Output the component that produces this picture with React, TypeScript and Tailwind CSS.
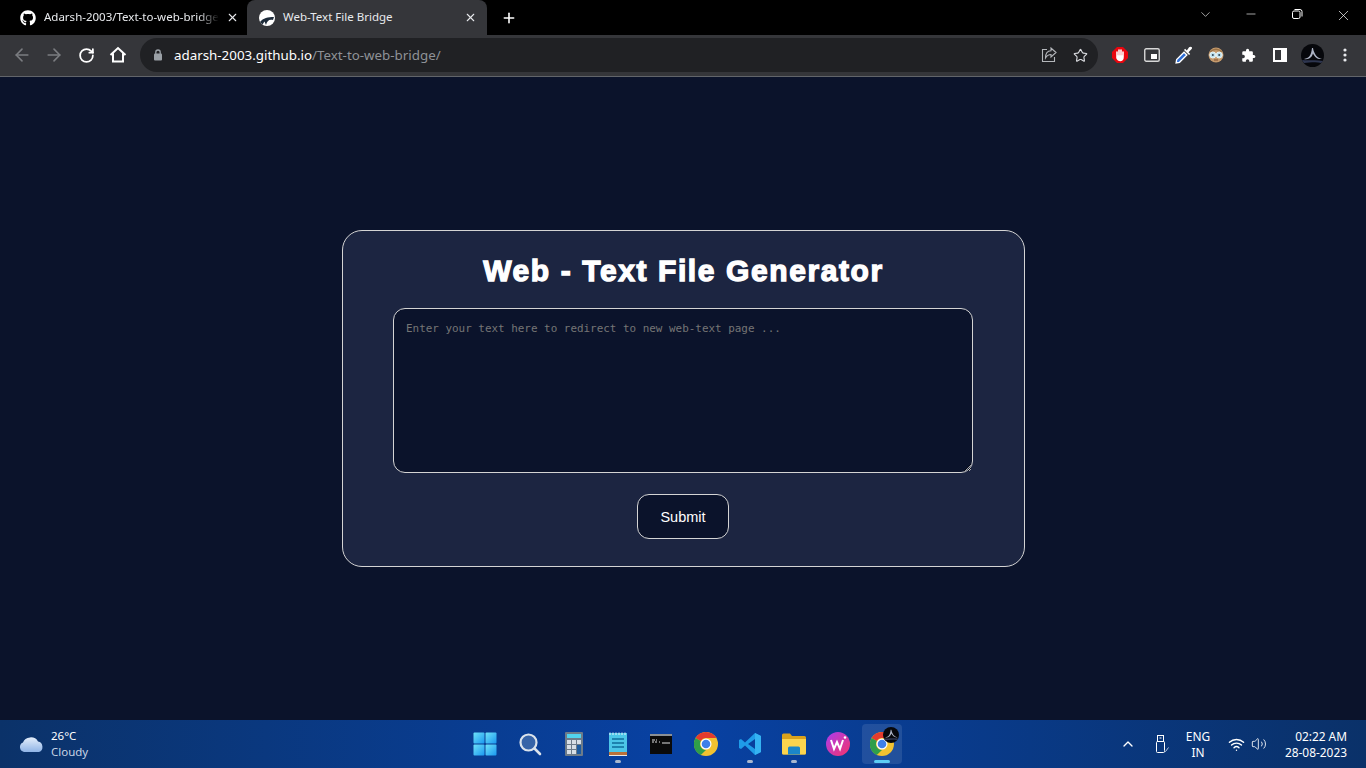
import React from "react";
import { FaGithub } from "react-icons/fa";
import { ArrowLeft, ArrowRight, RotateCw, Star, X, Plus, ChevronDown, ChevronUp, Minus, Wifi, Volume2 } from "lucide-react";

const sys = "font-['Noto_Sans','Open_Sans',sans-serif]";

function Favicon() {
  return (
    <svg width="16" height="16" viewBox="0 0 16 16">
      <circle cx="8" cy="8" r="8" fill="#fff" />
      <path d="M1 12 C4 8 9 7 15 7 L14 10 C10 9 8 11 7 15 L5.5 11.5 L3.5 14.5 Z" fill="#1d2b3a" />
    </svg>
  );
}

function Avatar({ size = 23 }: { size?: number }) {
  return (
    <svg width={size} height={size} viewBox="0 0 23 23">
      <circle cx="11.5" cy="11.5" r="11.5" fill="#06070b" />
      <path d="M3 15 C8 14 10 12 11 4 L12 4 C13 10 16 14 21 15 C16 15.5 14 13 12 9.5 C11 13 8 16 3 15Z" fill="#aeb5c6" />
      <path d="M1 16 C7 17 15 15.5 22 17 L20 19 C14 17.5 8 19 3 19Z" fill="#2e3650" />
    </svg>
  );
}

function TabStrip() {
  return (
    <div className={`flex h-[35px] items-stretch bg-black text-white ${sys}`}>
      <div className="flex w-[247px] items-center pl-[20px]">
        <FaGithub size={16} className="shrink-0 text-white" />
        <span className="ml-[8px] w-[175px] overflow-hidden pb-[2px] whitespace-nowrap text-[11.5px] text-[#e8eaed] [mask-image:linear-gradient(to_right,black_88%,transparent)]">
          Adarsh-2003/Text-to-web-bridge
        </span>
        <X size={13} strokeWidth={2} className="ml-[7px] shrink-0 text-[#e8eaed]" />
      </div>
      <div className="flex w-[240px] items-center rounded-t-[8px] bg-[#35363a] pl-[12px]">
        <Favicon />
        <span className="ml-[8px] w-[181px] pb-[2px] whitespace-nowrap text-[11.5px] text-[#e8eaed]">Web-Text File Bridge</span>
        <X size={13} strokeWidth={2} className="shrink-0 text-[#e8eaed]" />
      </div>
      <div className="flex w-[44px] items-center justify-center">
        <Plus size={16} strokeWidth={2.4} className="text-white" />
      </div>
      <div className="flex-1" />
      <div className="flex items-start pt-[7px] text-white">
        <div className="flex w-[46px] justify-center"><ChevronDown size={15} strokeWidth={1} /></div>
        <div className="flex w-[46px] justify-center"><Minus size={14} strokeWidth={1.1} /></div>
        <div className="flex w-[46px] justify-center">
          <svg width="14" height="14" viewBox="0 0 14 14" fill="none" stroke="#ffffff" strokeWidth="1">
            <rect x="2.5" y="4" width="7.5" height="7.5" rx="1.5" />
            <path d="M4.5 2.5 H10 A2 2 0 0 1 12 4.5 V9.5" />
          </svg>
        </div>
        <div className="flex w-[46px] justify-center"><X size={17} strokeWidth={1} /></div>
      </div>
    </div>
  );
}

function Toolbar() {
  return (
    <div className={`flex h-[42px] items-center border-b border-[#62656a] bg-[#35363a] pb-[1px] ${sys}`}>
      <div className="ml-[6px] flex w-[32px] justify-center"><ArrowLeft size={20} strokeWidth={1.9} className="text-[#7b7d81]" /></div>
      <div className="flex w-[32px] justify-center"><ArrowRight size={20} strokeWidth={1.9} className="text-[#7b7d81]" /></div>
      <div className="flex w-[32px] justify-center"><RotateCw size={17} strokeWidth={2.5} className="text-white" /></div>
      <div className="flex w-[32px] justify-center">
        <svg width="18" height="18" viewBox="0 0 18 18" fill="none" stroke="#fff" strokeWidth="2" strokeLinejoin="miter">
          <path d="M1.5 9 L9 2 L16.5 9 M4 7.5 V15.5 H14 V7.5" />
        </svg>
      </div>
      <div className="ml-[6px] flex h-[34px] w-[958px] items-center rounded-full bg-[#202124] pl-[13px]">
        <svg width="10" height="12" viewBox="0 0 10 12" fill="#9aa0a6">
          <rect x="1" y="4.5" width="8" height="7" rx="1" />
          <path d="M2.8 5 V3.2 A2.2 2.2 0 0 1 7.2 3.2 V5" fill="none" stroke="#9aa0a6" strokeWidth="1.3" />
        </svg>
        <span className="ml-[11px] whitespace-nowrap text-[13.35px] text-white">
          adarsh-2003.github.io<span className="text-[#8f9297]">/Text-to-web-bridge/</span>
        </span>
        <div className="flex-1" />
        <svg width="16" height="16" viewBox="0 0 16 16" fill="none" stroke="#b4b7bb" strokeWidth="1.1">
          <path d="M6 2.5 H1.5 V14.5 H13.5 V10" />
          <path d="M15 5.5 L10 1 V3.8 C6 4 4.5 7 4.5 11 C6 8.5 8 7.5 10 7.5 V10 Z" />
        </svg>
        <Star size={15} strokeWidth={1.8} className="mr-[10px] ml-[16px] text-[#dadce0]" />
      </div>
      <div className="ml-[6px] flex items-center">
        <div className="flex w-[32px] justify-center">
          <svg width="16" height="16" viewBox="0 0 16 16">
            <path d="M5 0 H11 L16 5 V11 L11 16 H5 L0 11 V5 Z" fill="#e8060e" />
            <path d="M5 9 V5 M7 8 V3 M9 8 V3 M11 9 V5 M5 9 L5 11 Q6 13.5 8.5 13.5 Q11 13 11 10 V9 Z" stroke="#fff" strokeWidth="1.6" fill="#fff" strokeLinecap="round" />
          </svg>
        </div>
        <div className="flex w-[32px] justify-center">
          <svg width="16" height="14" viewBox="0 0 16 14">
            <rect x="0.75" y="0.75" width="14.5" height="12.5" rx="1.5" fill="none" stroke="#d8d8d8" strokeWidth="1.4" />
            <rect x="7" y="6" width="6" height="5" fill="#fff" />
          </svg>
        </div>
        <div className="flex w-[32px] justify-center">
          <svg width="18" height="18" viewBox="0 0 16 16">
            <path d="M1 15 L1.5 12 L8 5.5 L10.5 8 L4 14.5 Z" fill="#2f6fd6" stroke="#fff" strokeWidth="1.2" />
            <path d="M8 3.5 L12.5 8 L13.5 7 L12 5.5 L15 2.5 Q15.5 1 14.5 0.8 Q13.5 0.2 12.5 1.2 L10.5 4 L9 2.5 Z" fill="#fff" />
          </svg>
        </div>
        <div className="flex w-[32px] justify-center">
          <svg width="16" height="16" viewBox="0 0 16 16">
            <circle cx="8" cy="8" r="7.5" fill="#c49a6c" />
            <path d="M2 6 Q8 0 14 6 L14 4 Q8 -1 2 4 Z" fill="#9b7448" />
            <circle cx="4.8" cy="8" r="3" fill="#bfe3ee" stroke="#e8f3f6" />
            <circle cx="11.2" cy="8" r="3" fill="#bfe3ee" stroke="#e8f3f6" />
            <circle cx="4.8" cy="8" r="1" fill="#345" />
            <circle cx="11.2" cy="8" r="1" fill="#345" />
            <path d="M6 13 H10" stroke="#8a5a3a" strokeWidth="1.2" />
          </svg>
        </div>
        <div className="flex w-[32px] justify-center">
          <svg width="15" height="15" viewBox="0 0 24 24" fill="#fff">
            <path d="M20.5 11H19V7a2 2 0 0 0-2-2h-4V3.5a2.5 2.5 0 0 0-5 0V5H4a2 2 0 0 0-2 2v3.8h1.5a2.7 2.7 0 0 1 0 5.4H2V20a2 2 0 0 0 2 2h3.8v-1.5a2.7 2.7 0 0 1 5.4 0V22H17a2 2 0 0 0 2-2v-4h1.5a2.5 2.5 0 0 0 0-5z" />
          </svg>
        </div>
        <div className="flex w-[32px] justify-center">
          <svg width="14" height="14" viewBox="0 0 14 14">
            <rect width="14" height="14" fill="#fff" />
            <rect x="2" y="2" width="6" height="10" fill="#35363a" />
          </svg>
        </div>
        <div className="flex w-[32px] justify-center"><Avatar /></div>
        <div className="flex w-[34px] justify-center">
          <svg width="4" height="14" viewBox="0 0 4 14" fill="#e8eaed">
            <circle cx="2" cy="2" r="1.6" /><circle cx="2" cy="7" r="1.6" /><circle cx="2" cy="12" r="1.6" />
          </svg>
        </div>
      </div>
    </div>
  );
}

function Card() {
  return (
    <div className="flex w-[683px] flex-col items-center rounded-[20px] border border-[#d4d4d4] bg-[#1c2541] pt-[18px] pb-[27px]">
      <h1 className="ml-[1px] font-['Liberation_Sans',Arial,sans-serif] text-[30px] leading-[44px] font-bold tracking-[1.6px] text-white [-webkit-text-stroke:1.3px_white]">
        Web - Text File Generator
      </h1>
      <textarea
        placeholder="Enter your text here to redirect to new web-text page ..."
        className="mt-[15px] h-[165px] w-[580px] rounded-[12px] border border-[#d4d4d4] bg-[#0b132b] px-[12px] py-[12px] font-['DejaVu_Sans_Mono',monospace] text-[10.93px] leading-[16px] text-white outline-none placeholder:text-[#757575]"
      />
      <button className="mt-[21px] h-[45px] w-[92px] rounded-[12px] border border-[#d4d4d4] bg-[#0b132b] pt-[2px] font-['Liberation_Sans',Arial,sans-serif] text-[14.5px] text-white">
        Submit
      </button>
    </div>
  );
}

function TaskIcon({ children, dot, active }: { children: React.ReactNode; dot?: boolean; active?: boolean }) {
  return (
    <div className={`relative flex items-center justify-center rounded-[4px] ${active ? "mx-[2px] h-[40px] w-[40px] bg-white/10" : "h-[42px] w-[44px]"}`}>
      {children}
      {dot && <span className="absolute bottom-[2px] h-[3px] w-[6px] rounded-full bg-[#a9b8cf]" />}
      {active && <span className="absolute bottom-[1px] h-[3px] w-[16px] rounded-full bg-[#5ccdf5]" />}
    </div>
  );
}

function ChromeLogo() {
  return (
    <svg width="24" height="24" viewBox="0 0 48 48">
      <circle cx="24" cy="24" r="24" fill="#f2c230" />
      <path d="M24 0 A24 24 0 0 1 44.8 12 H24 A12 12 0 0 0 13.6 18 L3.2 12 A24 24 0 0 1 24 0Z" fill="#e33b2e" />
      <path d="M3.2 12 L13.6 18 A12 12 0 0 0 24 36 L13.6 46 A24 24 0 0 1 3.2 12Z" fill="#2f9e4a" />
      <circle cx="24" cy="24" r="11" fill="#fff" />
      <circle cx="24" cy="24" r="8.6" fill="#3f7fe8" />
    </svg>
  );
}

function Taskbar() {
  return (
    <div className={`grid h-[48px] grid-cols-[1fr_auto_1fr] items-center bg-linear-to-r from-[#0b3269] via-[#0841a3] to-[#0a3169] text-white ${sys}`}>
      <div className="flex items-center pl-[18px]">
        <svg width="26" height="18" viewBox="0 0 26 18">
          <defs>
            <linearGradient id="cl" x1="0" y1="0" x2="0" y2="1">
              <stop offset="0" stopColor="#e4eefb" />
              <stop offset="1" stopColor="#8fb4e6" />
            </linearGradient>
          </defs>
          <path d="M6 17 A5 5 0 0 1 5 7.5 A8 7 0 0 1 20 6.5 A5.5 5.5 0 0 1 21 17 Z" fill="url(#cl)" />
        </svg>
        <div className="ml-[7px] flex flex-col text-[11.5px] leading-[16px]">
          <span>26°C</span>
          <span className="text-[#c7d3e4]">Cloudy</span>
        </div>
      </div>
      <div className="ml-[1px] flex items-center">
        <TaskIcon>
          <svg width="24" height="24" viewBox="0 0 24 24" className="-translate-x-px">
            <defs>
              <linearGradient id="win" x1="0" y1="0" x2="1" y2="1">
                <stop offset="0" stopColor="#6ee2f8" />
                <stop offset="1" stopColor="#1a98f0" />
              </linearGradient>
            </defs>
            <rect x="0.5" y="0.5" width="11" height="11" rx="1" fill="url(#win)" />
            <rect x="12.5" y="0.5" width="11" height="11" rx="1" fill="url(#win)" />
            <rect x="0.5" y="12.5" width="11" height="11" rx="1" fill="url(#win)" />
            <rect x="12.5" y="12.5" width="11" height="11" rx="1" fill="url(#win)" />
          </svg>
        </TaskIcon>
        <TaskIcon>
          <svg width="24" height="24" viewBox="0 0 24 24" fill="none">
            <circle cx="10.5" cy="10.5" r="8" fill="#3764a8" stroke="#dbe3ec" strokeWidth="2.2" />
            <path d="M16.5 16.5 L22 22" stroke="#dbe3ec" strokeWidth="2.6" strokeLinecap="round" />
          </svg>
        </TaskIcon>
        <TaskIcon>
          <svg width="18" height="24" viewBox="0 0 18 24">
            <rect width="18" height="24" rx="1" fill="#6d7b89" />
            <rect x="2" y="2" width="14" height="4" fill="#52d3ee" />
            <g fill="#d7dee5">
              <rect x="2" y="8" width="4" height="4" /><rect x="7" y="8" width="4" height="4" /><rect x="12" y="8" width="4" height="4" />
              <rect x="2" y="13" width="4" height="4" /><rect x="7" y="13" width="4" height="4" />
              <rect x="2" y="18" width="4" height="4" /><rect x="7" y="18" width="4" height="4" />
            </g>
            <rect x="12" y="13" width="4" height="9" fill="#1c5a9e" />
          </svg>
        </TaskIcon>
        <TaskIcon dot>
          <svg width="18" height="24" viewBox="0 0 18 24">
            <rect y="1" width="18" height="19" fill="#4cc6e8" />
            <rect y="20" width="18" height="3" fill="#b9713a" />
            <rect y="23" width="18" height="1" fill="#e8e8e8" />
            <path d="M1 0.5 V3 M4 0.5 V3 M7 0.5 V3 M10 0.5 V3 M13 0.5 V3 M16 0.5 V3" stroke="#e6f4fa" strokeWidth="1" />
            <path d="M3 7 H15 M3 11 H15 M3 15 H15" stroke="#0f6d9c" strokeWidth="1.6" />
          </svg>
        </TaskIcon>
        <TaskIcon>
          <svg width="22" height="20" viewBox="0 0 22 20" className="-translate-x-px">
            <rect width="22" height="20" fill="#0a0a0a" />
            <rect width="22" height="2" fill="#8a8f94" />
            <path d="M2 6 H5 M6 6 H7 M2 8 H4 M5 8 H7 M9 8 H10 M12 9 H20" stroke="#e0e0e0" strokeWidth="1" />
          </svg>
        </TaskIcon>
        <TaskIcon><ChromeLogo /></TaskIcon>
        <TaskIcon dot>
          <svg width="24" height="24" viewBox="0 0 24 24">
            <path d="M17 1 L23 4 V20 L17 23 L7 13.5 L3 17 L1 16 V8 L3 7 L7 10.5 Z M17 7 L10 12 L17 17 Z" fill="#1f9ce8" fillRule="evenodd" />
            <path d="M17 1 L23 4 V20 L17 23 Z" fill="#35b3f2" />
          </svg>
        </TaskIcon>
        <TaskIcon dot>
          <svg width="24" height="22" viewBox="0 0 24 22">
            <path d="M0 2 Q0 0.5 1.5 0.5 H8 L10 3 H22.5 Q24 3 24 4.5 V20 Q24 21.5 22.5 21.5 H1.5 Q0 21.5 0 20 Z" fill="#d9a21d" />
            <path d="M0 6 H24 V20 Q24 21.5 22.5 21.5 H1.5 Q0 21.5 0 20 Z" fill="#fbd44e" />
            <path d="M6 21.5 V15 Q6 13.5 7.5 13.5 H16.5 Q18 13.5 18 15 V21.5 Z" fill="#1b86c9" />
          </svg>
        </TaskIcon>
        <TaskIcon>
          <svg width="24" height="24" viewBox="0 0 24 24">
            <defs>
              <linearGradient id="wp" x1="0" y1="0" x2="1" y2="1">
                <stop offset="0" stopColor="#a83df0" />
                <stop offset="1" stopColor="#f5336a" />
              </linearGradient>
            </defs>
            <circle cx="12" cy="12" r="12" fill="url(#wp)" />
            <path d="M5 8 L8 17 L11 10 L14 17 L17 8" stroke="#fff" strokeWidth="2" fill="none" />
            <circle cx="19" cy="5.5" r="1.3" fill="#fff" />
          </svg>
        </TaskIcon>
        <TaskIcon active>
          <ChromeLogo />
          <span className="absolute top-[3px] right-[3px] flex"><Avatar size={16} /></span>
        </TaskIcon>
      </div>
      <div className="flex items-center justify-end pr-[19px]">
        <ChevronUp size={16} strokeWidth={2} className="mr-[19px] text-white" />
        <svg width="14" height="18" viewBox="0 0 14 18" fill="none" stroke="#fff" strokeWidth="1" className="mr-[10px]">
          <rect x="1.5" y="6.5" width="8" height="11" rx="1" />
          <rect x="2.5" y="0.5" width="6" height="6" />
          <path d="M4.5 3 H6.5" />
          <path d="M9 15 L10.5 16.5 L13.5 12.5" stroke="#b9c8dc" />
        </svg>
        <div className="flex w-[38px] flex-col items-center text-[11.9px] leading-[16px]">
          <span>ENG</span>
          <span>IN</span>
        </div>
        <Wifi size={17} strokeWidth={2} className="ml-[11px] text-white" />
        <Volume2 size={16} strokeWidth={1.3} className="mr-[18px] ml-[6px] text-white" />
        <div className="flex flex-col items-end text-[11.9px] leading-[16px]">
          <span>02:22 AM</span>
          <span>28-08-2023</span>
        </div>
      </div>
    </div>
  );
}

export default function App() {
  return (
    <div className="flex h-[768px] w-[1366px] flex-col overflow-hidden bg-[#0b132b]">
      <TabStrip />
      <Toolbar />
      <main className="flex flex-1 items-center justify-center">
        <Card />
      </main>
      <Taskbar />
    </div>
  );
}
